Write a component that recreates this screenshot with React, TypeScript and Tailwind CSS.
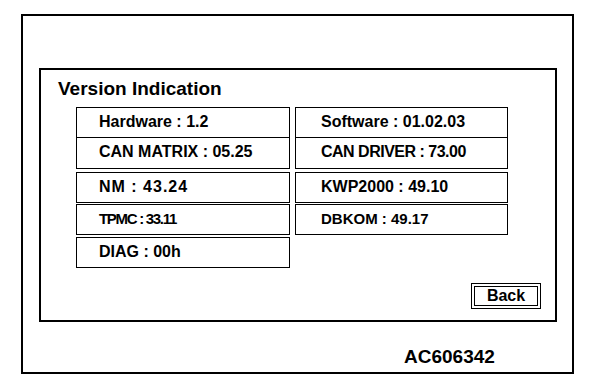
const font = { fontFamily: '"Liberation Sans", Arial, sans-serif' }

const left = [
  { text: "Hardware : 1.2", cls: "border border-black", size: "text-[16px]" },
  { text: "CAN MATRIX : 05.25", cls: "border border-black border-t-0", size: "text-[16px]" },
  { text: "NM : 43.24", cls: "border border-black mt-[3px]", size: "text-[16px] tracking-[1px]" },
  { text: "TPMC : 33.11", cls: "border border-black mt-[1px]", size: "text-[15px] tracking-[-1.3px]" },
  { text: "DIAG : 00h", cls: "border border-black mt-[2px]", size: "text-[16px]" },
]

const right = [
  { text: "Software : 01.02.03", cls: "border border-black", size: "text-[16px]" },
  { text: "CAN DRIVER : 73.00", cls: "border border-black border-t-0", size: "text-[16px] tracking-[-0.5px]" },
  { text: "KWP2000 : 49.10", cls: "border border-black mt-[3px]", size: "text-[16px]" },
  { text: "DBKOM : 49.17", cls: "border border-black mt-[1px]", size: "text-[15px]" },
]

function Cell({ text, cls, size, pl }: { text: string; cls: string; size: string; pl: string }) {
  return (
    <div className={`h-[31px] flex items-center pb-[2px] ${pl} ${cls}`}>
      <span className={`${size} font-bold leading-none text-black whitespace-nowrap`}>{text}</span>
    </div>
  )
}

export default function App() {
  return (
    <div className="w-[608px] h-[384px] bg-white pl-[21px] pt-[14px]" style={font}>
      <div className="w-[553px] h-[360px] border-2 border-black pl-[16px] pt-[52px] flex flex-col">
        <div className="w-[518px] h-[254px] border-2 border-black flex flex-col">
          <h1 className="pl-[17px] pt-[9px] text-[19px] leading-[19px] font-bold text-black">Version Indication</h1>
          <div className="flex gap-[5px] ml-[35px] mt-[9px]">
            <div className="w-[214px] flex flex-col">
              {left.map((c, i) => (
                <Cell key={i} {...c} pl="pl-[22px]" />
              ))}
            </div>
            <div className="w-[213px] flex flex-col">
              {right.map((c, i) => (
                <Cell key={i} {...c} pl="pl-[25px]" />
              ))}
            </div>
          </div>
          <div className="flex justify-end pr-[14px] mt-[15px]">
            <div className="w-[70px] h-[26px] border border-black p-[2px]">
              <div className="w-full h-full border border-black flex items-center justify-center">
                <span className="text-[16px] leading-none font-bold text-black">Back</span>
              </div>
            </div>
          </div>
        </div>
        <div className="ml-[365px] mt-[25px] text-[19px] leading-[19px] font-bold text-black">AC606342</div>
      </div>
    </div>
  )
}
